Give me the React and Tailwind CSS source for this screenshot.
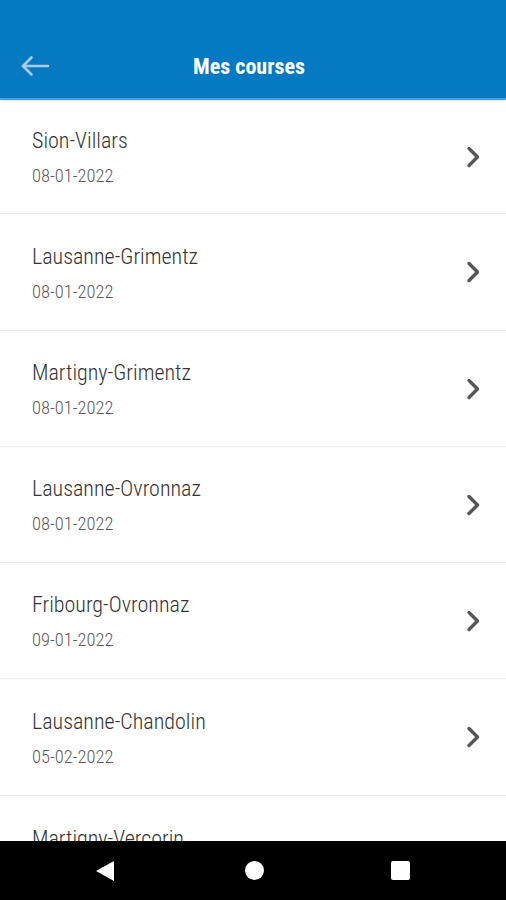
const courses = [
  { name: "Sion-Villars", date: "08-01-2022" },
  { name: "Lausanne-Grimentz", date: "08-01-2022" },
  { name: "Martigny-Grimentz", date: "08-01-2022" },
  { name: "Lausanne-Ovronnaz", date: "08-01-2022" },
  { name: "Fribourg-Ovronnaz", date: "09-01-2022" },
  { name: "Lausanne-Chandolin", date: "05-02-2022" },
  { name: "Martigny-Vercorin", date: "05-02-2022" },
];

// row heights as measured on the screenshot
const heights = ["h-[114px]", "h-[117px]", "h-[116px]", "h-[116px]", "h-[116px]", "h-[117px]", "h-[117px]"];

const font = { fontFamily: '"Roboto Condensed", "Roboto", sans-serif' };

export default function App() {
  return (
    <div className="flex h-[900px] flex-col overflow-hidden bg-white" style={font}>
      {/* app bar */}
      <div className="relative flex h-[100px] shrink-0 items-end border-b-2 border-[#4e9cd8] bg-[#0679c3] shadow-sm">
        <div className="flex h-[66px] w-full items-center pt-[2px]">
          <button className="ml-[20px] flex h-[30px] w-[30px] items-center justify-center">
            <svg width="30" height="24" viewBox="0 0 30 24" fill="none" stroke="#a9cbe6" strokeWidth="2.6" strokeLinecap="round" strokeLinejoin="round">
              <path d="M28 12H3" />
              <path d="M11.5 3.5L3 12l8.5 8.5" />
            </svg>
          </button>
          <h1 className="absolute left-[249px] -translate-x-1/2 text-[22px] font-bold text-white">
            Mes courses
          </h1>
        </div>
      </div>

      {/* list */}
      <div className="flex-1 overflow-hidden">
        {courses.map((c, i) => (
          <div key={i} className={`flex items-center border-b border-[#efefef] pl-[32px] pr-[24px] ${heights[i]}`}>
            <div className="mt-[3px] flex flex-1 flex-col">
              <span className="text-[22px] font-light leading-[26px] text-[#333333]">{c.name}</span>
              <span className="mt-[10px] text-[18.5px] font-light leading-[24px] text-[#5c5c5c]">{c.date}</span>
            </div>
            <svg width="18" height="24" viewBox="0 0 18 24" fill="none" stroke="#555555" strokeWidth="3.4" strokeLinecap="round" strokeLinejoin="round">
              <path d="M5 3.5l8.5 8.5L5 20.5" />
            </svg>
          </div>
        ))}
      </div>

      {/* android nav bar */}
      <div className="flex h-[59px] shrink-0 items-center bg-black">
        <div className="flex w-full items-center">
          <div className="ml-[96px] h-0 w-0 border-y-[10px] border-r-[18px] border-y-transparent border-r-white" />
          <div className="ml-[131px] h-[19px] w-[19px] rounded-full bg-white" />
          <div className="ml-[127px] h-[19px] w-[19px] rounded-[2px] bg-white" />
        </div>
      </div>
    </div>
  );
}
